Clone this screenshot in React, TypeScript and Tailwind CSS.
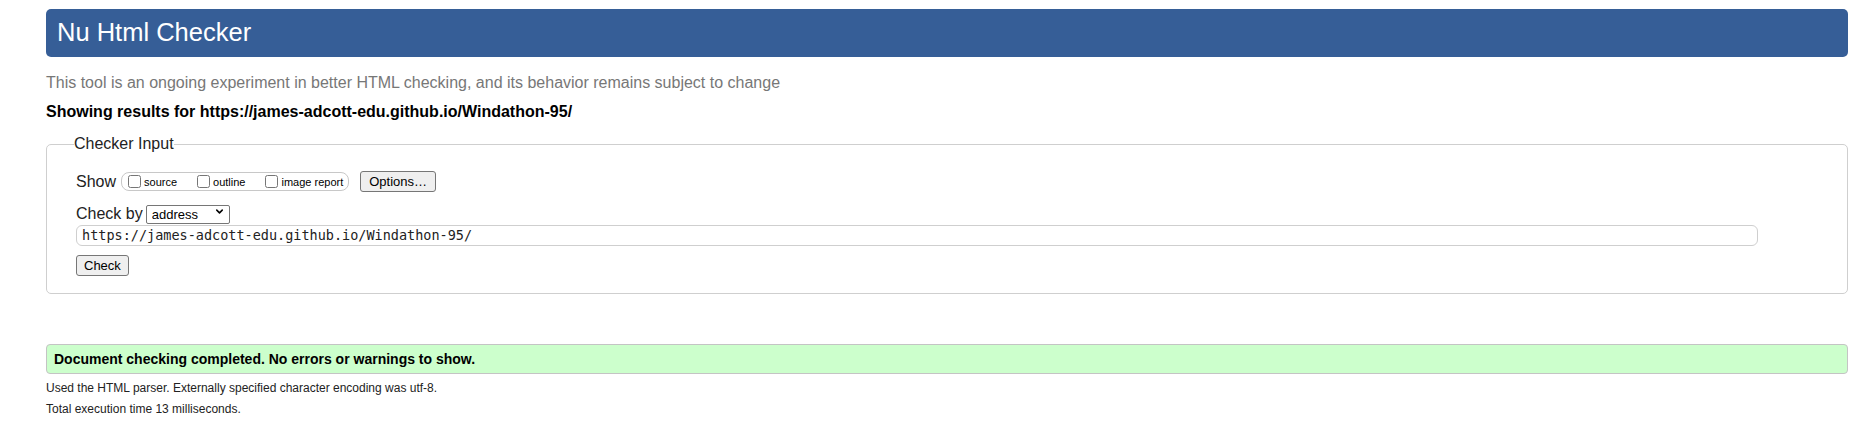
import { ChevronDown } from "lucide-react";

const showOptions = ["source", "outline", "image report"];

function ShowGroup() {
  return (
    <div className="flex h-[19px] items-center gap-[20px] rounded-[8px] border border-[#c8c8c8] pl-[6px] pr-[5px]">
      {showOptions.map((label) => (
        <label key={label} className="flex items-center gap-[3px] text-[11px] leading-[13px]">
          <input type="checkbox" className="m-0 h-[13px] w-[13px]" />
          <span className="pt-[2px]">{label}</span>
        </label>
      ))}
    </div>
  );
}

export default function App() {
  return (
    <div className="min-h-[423px] w-[1850px] bg-white pl-[46px] pt-[9px] font-['Liberation_Sans',Arial,sans-serif] text-black">
      <div className="w-[1802px]">
        <h1 className="flex h-[48px] items-center rounded-[5px] bg-[#365e97] pb-[2px] pl-[11px] text-[25.5px] font-normal text-white">
          Nu Html Checker
        </h1>

        <p className="mt-[16px] text-[16px] leading-[20px] text-[#777]">
          This tool is an ongoing experiment in better HTML checking, and its behavior remains subject to change
        </p>
        <p className="mt-[9px] text-[16px] font-bold leading-[20px]">
          Showing results for https://james-adcott-edu.github.io/Windathon-95/
        </p>

        <div className="relative mt-[22px] rounded-[5px] border border-[#cfcfcf] pb-[17px] pl-[29px] pt-[26px]">
          <span className="absolute left-[27px] top-[-11px] bg-white text-[16px] leading-[20px] text-[#222]">
            Checker Input
          </span>

          <div className="flex h-[21px] items-center">
            <span className="text-[16px] leading-[20px] text-[#222]">Show</span>
            <div className="ml-[5px]">
              <ShowGroup />
            </div>
            <button className="ml-[11px] h-[21px] rounded-[3px] border border-[#767676] bg-[#efefef] px-[8px] text-[13px] leading-[17px]">
              Options…
            </button>
          </div>

          <div className="mt-[12px] flex h-[19px] items-center">
            <span className="text-[16px] leading-[19px] text-[#222]">Check by</span>
            <div className="relative ml-[3px]">
              <select className="h-[19px] w-[84px] appearance-none rounded-[2px] border border-[#767676] bg-white pl-[5px] text-[13px] leading-[17px]">
                <option>address</option>
              </select>
              <ChevronDown
                size={11}
                strokeWidth={3.4}
                className="pointer-events-none absolute right-[5px] top-[4px] text-black"
              />
            </div>
          </div>

          <div className="mt-[2px] flex h-[21px] w-[1682px] items-center rounded-[6px] border border-[#cfcfcf] pl-[5px] font-['DejaVu_Sans_Mono',monospace] text-[13.5px] text-[#222]">
            https://james-adcott-edu.github.io/Windathon-95/
          </div>

          <button className="mt-[9px] block h-[21px] rounded-[3px] border border-[#767676] bg-[#efefef] px-[7px] text-[13px] leading-[17px]">
            Check
          </button>
        </div>

        <div className="mt-[50px] flex h-[30px] items-center rounded-[4px] border border-[#c4c4c4] bg-[#ccffcc] pl-[7px] text-[14px] font-bold">
          Document checking completed. No errors or warnings to show.
        </div>

        <p className="mt-[7px] text-[12px] leading-[15px] text-[#222]">
          Used the HTML parser. Externally specified character encoding was utf-8.
        </p>
        <p className="mt-[6px] text-[12px] leading-[15px] text-[#222]">Total execution time 13 milliseconds.</p>
      </div>
    </div>
  );
}
